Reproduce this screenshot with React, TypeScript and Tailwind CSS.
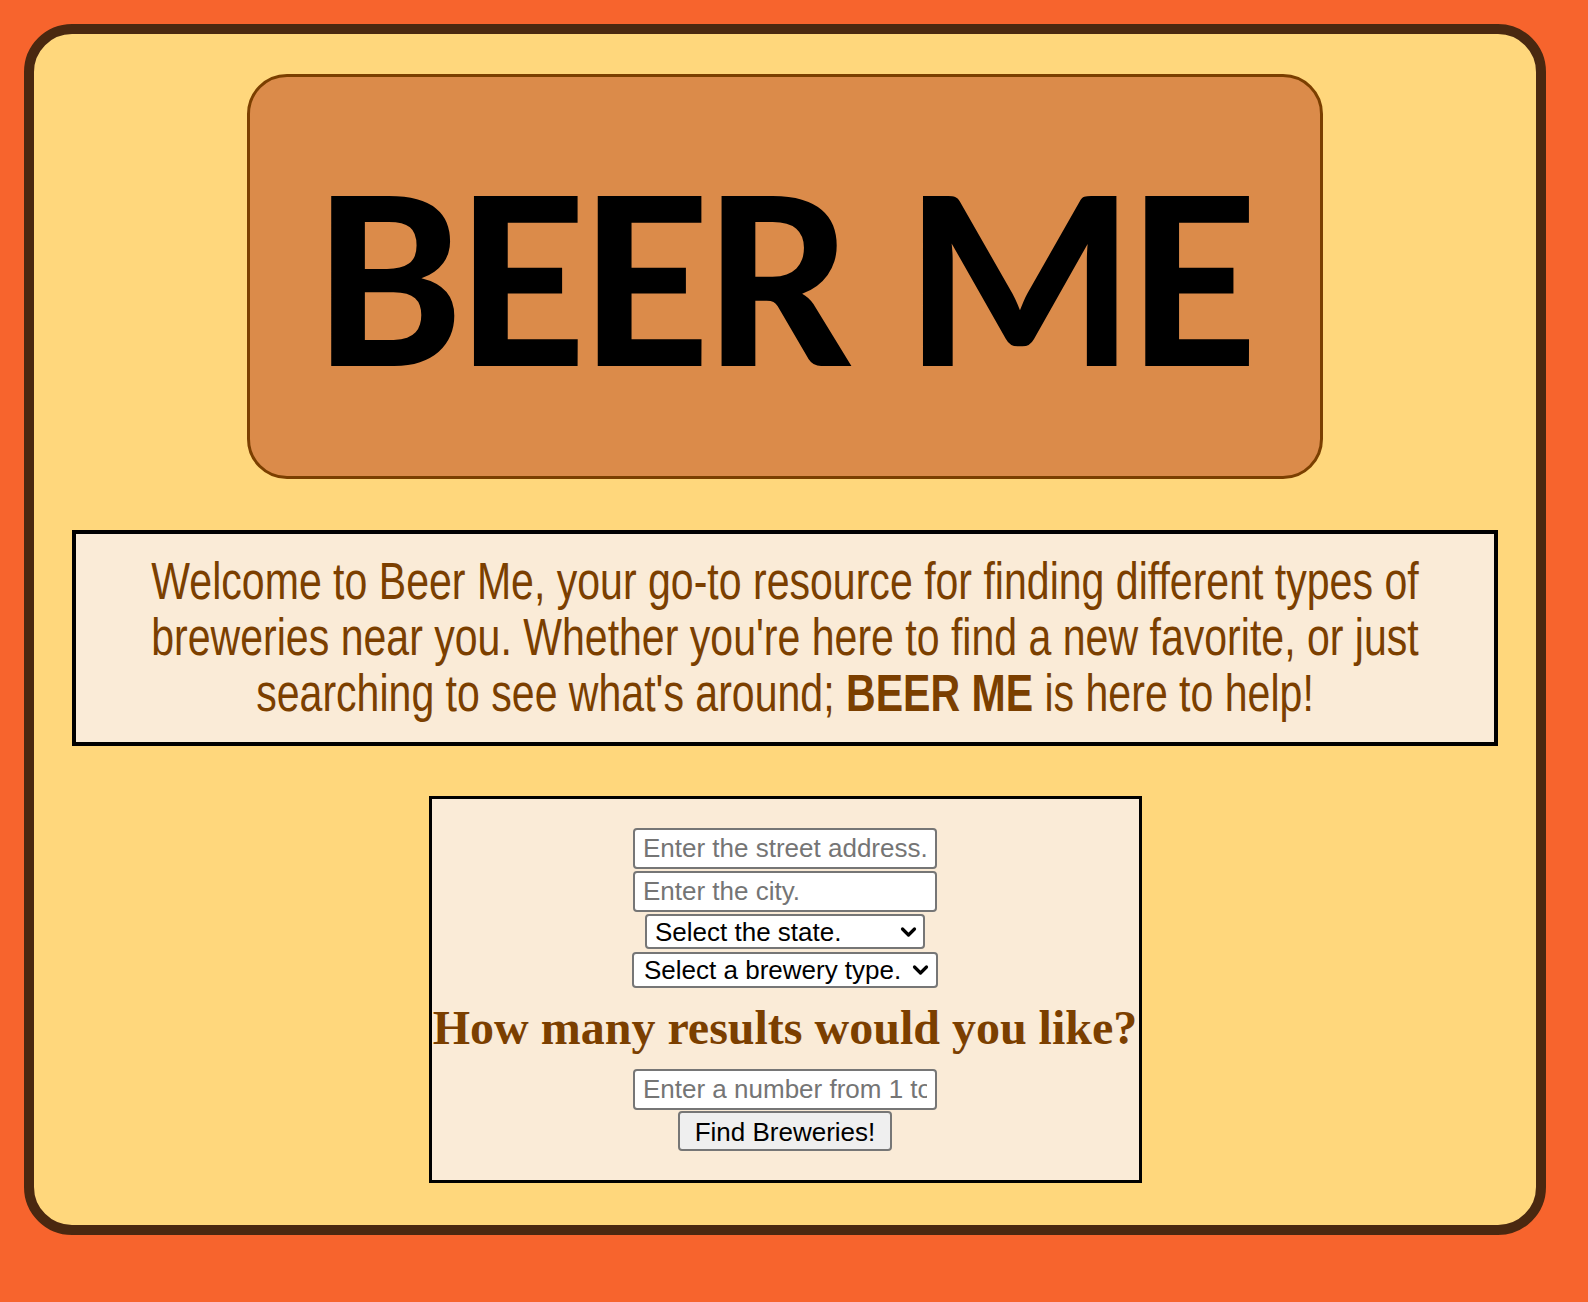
import React from "react";

function Chevron({ right }: { right: string }) {
  return (
    <svg
      width="17"
      height="11"
      viewBox="0 0 17 11"
      className={"pointer-events-none absolute top-1/2 -translate-y-1/2 " + right}
    >
      <path d="M2.5 2.5 L8.5 8.5 L14.5 2.5" fill="none" stroke="#000" strokeWidth="3.2" strokeLinecap="round" strokeLinejoin="round" />
    </svg>
  );
}

export default function App() {
  const inputCls =
    "block bg-white border-2 border-[#767676] rounded-[4px] px-[8px] text-[26px] text-black placeholder:text-[#757575] outline-none [font-family:'Liberation_Sans',Arial,sans-serif]";
  const selectCls =
    "block appearance-none bg-white border-2 border-[#767676] rounded-[4px] text-[26px] leading-[30px] text-black outline-none [font-family:'Liberation_Sans',Arial,sans-serif]";
  return (
    <div className="min-h-screen w-full bg-[#F7642D] pt-[24px] pb-[68px] pl-[24px]">
      <div className="w-[1522px] border-[10px] border-[#4A2810] rounded-[48px] bg-[#FFD77C] pt-[40px] pb-[42px] flex flex-col items-center">
        <div className="w-[1076px] h-[405px] border-[3px] border-[#7B3F00] rounded-[40px] bg-[#DB8B4A] flex items-center justify-center">
          <h1 className="text-black font-bold text-[262px] leading-none tracking-[-4px] [font-family:Carlito,Lato,sans-serif]">BEER ME</h1>
        </div>

        <div className="mt-[51px] w-[1426px] h-[216px] border-4 border-black bg-[#FAEBD7] overflow-hidden flex items-center justify-center">
          <p className="shrink-0 w-[1700px] scale-x-[0.805] text-center text-[#7B3F00] text-[51px] leading-[56px] [font-family:'Liberation_Sans',Arial,sans-serif]">
            Welcome to Beer Me, your go-to resource for finding different types of
            <br />
            breweries near you. Whether you're here to find a new favorite, or just
            <br />
            searching to see what's around; <b>BEER ME</b> is here to help!
          </p>
        </div>

        <form
          className="mt-[50px] w-[713px] border-[3px] border-black bg-[#FAEBD7] pt-[29px] pb-[29px] flex flex-col items-center"
          onSubmit={(e) => e.preventDefault()}
        >
          <input className={inputCls + " w-[304px] h-[41px]"} placeholder="Enter the street address." />
          <input className={inputCls + " mt-[2px] w-[304px] h-[41px]"} placeholder="Enter the city." />
          <div className="relative mt-[2px]">
            <select className={selectCls + " w-[280px] h-[35px] pl-[8px] pr-[30px]"} defaultValue="">
              <option value="">Select the state.</option>
            </select>
            <Chevron right="right-[8px]" />
          </div>
          <div className="relative mt-[3px]">
            <select className={selectCls + " w-[306px] h-[36px] pl-[10px] pr-[28px]"} defaultValue="">
              <option value="">Select a brewery type.</option>
            </select>
            <Chevron right="right-[9px]" />
          </div>
          <h2 className="mt-[13px] text-[48px] leading-[54px] font-bold text-[#7B3F00] whitespace-nowrap [font-family:'Liberation_Serif','Times_New_Roman',serif]">
            How many results would you like?
          </h2>
          <input className={inputCls + " mt-[14px] w-[304px] h-[41px]"} placeholder="Enter a number from 1 to 50." />
          <button
            type="submit"
            className="mt-[1px] w-[214px] h-[40px] bg-[#EFEFEF] border-2 border-[#767676] rounded-[4px] text-[26px] text-black [font-family:'Liberation_Sans',Arial,sans-serif]"
          >
            Find Breweries!
          </button>
        </form>
      </div>
    </div>
  );
}
